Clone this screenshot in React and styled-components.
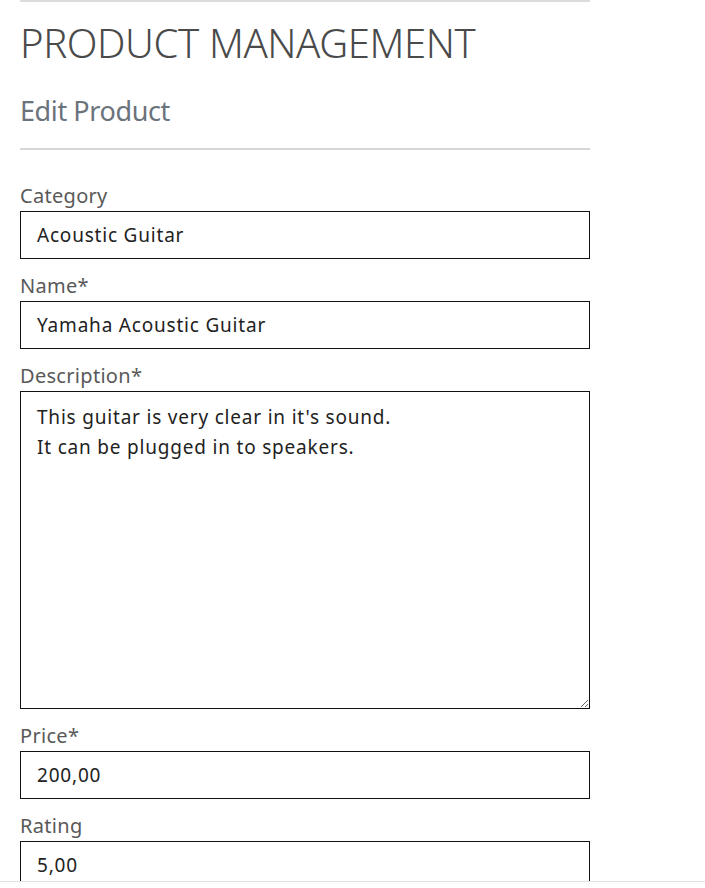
import React from 'react';
import styled, { createGlobalStyle } from 'styled-components';

const GlobalStyle = createGlobalStyle`
	body {
		margin: 0;
		background: #fff;
		font-family: 'Noto Sans', 'Open Sans', sans-serif;
	}
`;

const Page = styled.div`
	width: 570px;
	margin-left: 20px;
	border-top: 2px solid #dcdcdc;
	padding-bottom: 40px;
`;

const Title = styled.h1`
	margin: 17px 0 0;
	font-size: 40px;
	font-weight: 300;
	line-height: 48px;
	color: #4a4a4a;
	letter-spacing: -0.4px;
`;

const SubTitle = styled.h2`
	margin: 27px 0 0;
	font-size: 27px;
	font-weight: 400;
	line-height: 34px;
	color: #6b737b;
	letter-spacing: -0.4px;
`;

const Divider = styled.hr`
	margin: 20px 0 29px;
	border: none;
	border-top: 2px solid #d6d6d6;
`;

const Form = styled.form`
	display: flex;
	flex-direction: column;
`;

const Field = styled.div`
	display: flex;
	flex-direction: column;
	margin-bottom: 10px;
`;

const Label = styled.label`
	padding-top: 3px;
	margin-bottom: 1px;
	font-size: 20px;
	line-height: 28px;
	color: #595959;
	letter-spacing: 0.3px;
`;

const Input = styled.input`
	box-sizing: border-box;
	height: 48px;
	width: 100%;
	border: 1px solid #111;
	border-radius: 0;
	padding: 0 16px;
	font-family: inherit;
	font-size: 19px;
	letter-spacing: 0.8px;
	color: #222;
	outline: none;
`;

const TextArea = styled.textarea`
	box-sizing: border-box;
	height: 318px;
	width: 100%;
	border: 1px solid #111;
	border-radius: 0;
	padding: 10px 16px;
	font-family: inherit;
	font-size: 19px;
	line-height: 30px;
	letter-spacing: 0.8px;
	color: #222;
	outline: none;
	resize: vertical;
`;

const BottomBar = styled.div`
	position: fixed;
	left: 0;
	right: 0;
	bottom: 0;
	height: 6px;
	background: #fff;
	border-top: 1px solid #e2e2e2;
`;

const fields = [
	{ id: 'category', label: 'Category', value: 'Acoustic Guitar' },
	{ id: 'name', label: 'Name*', value: 'Yamaha Acoustic Guitar' },
	{ id: 'description', label: 'Description*', value: "This guitar is very clear in it's sound.\nIt can be plugged in to speakers.", multiline: true },
	{ id: 'price', label: 'Price*', value: '200,00' },
	{ id: 'rating', label: 'Rating', value: '5,00' },
];

export default function App() {
	return (
		<>
			<GlobalStyle />
			<Page>
				<Title>PRODUCT MANAGEMENT</Title>
				<SubTitle>Edit Product</SubTitle>
				<Divider />
				<Form>
					{fields.map((f) => (
						<Field key={f.id}>
							<Label htmlFor={f.id}>{f.label}</Label>
							{f.multiline ? (
								<TextArea id={f.id} defaultValue={f.value} />
							) : (
								<Input id={f.id} defaultValue={f.value} />
							)}
						</Field>
					))}
				</Form>
			</Page>
			<BottomBar />
		</>
	);
}
